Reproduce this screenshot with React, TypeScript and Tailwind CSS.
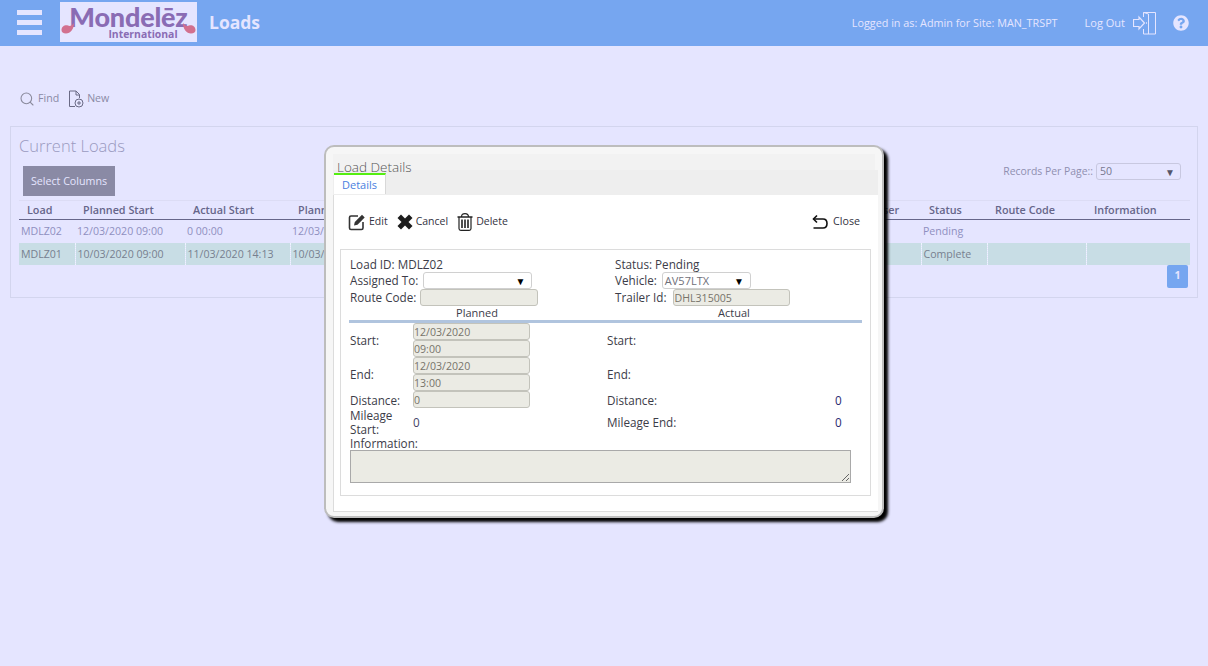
import React from "react";
import { Search } from "lucide-react";
import { FaQuestionCircle } from "react-icons/fa";

const font = "font-['Open_Sans','Noto_Sans',sans-serif]";

const cols = [
  { h: "Load", w: 56, a: "MDLZ02", b: "MDLZ01" },
  { h: "Planned Start", w: 110, a: "12/03/2020 09:00", b: "10/03/2020 09:00" },
  { h: "Actual Start", w: 105, a: "0 00:00", b: "11/03/2020 14:13" },
  { h: "Planned End", w: 110, a: "12/03/2020 13:00", b: "10/03/2020 13:00" },
  { h: "Actual End", w: 110, a: "", b: "" },
  { h: "Distance", w: 120, a: "0", b: "0" },
  { h: "Vehicle", w: 120, a: "AV57LTX", b: "AV57LTX" },
  { h: "Trailer", w: 117, a: "DHL315005", b: "" },
  { h: "User", w: 54, a: "", b: "" },
  { h: "Status", w: 66, a: "Pending", b: "Complete" },
  { h: "Route Code", w: 99, a: "", b: "" },
  { h: "Information", w: 104, a: "", b: "" },
];

function Disabled({ value, className = "" }: { value?: string; className?: string }) {
  return (
    <div className={`h-[17px] bg-[#ebebe4] border border-[#c3c3bb] rounded-[3px] text-[10.6px] leading-[16px] text-[#77736a] ${className}`}>
      {value}
    </div>
  );
}

function Select({ value, className }: { value?: string; className: string }) {
  return (
    <div className={`h-[17px] bg-white border border-[#d0d0d0] rounded-[3px] flex items-center justify-between pl-[2px] pr-[6px] text-[11px] text-[#6f6f78] ${className}`}>
      <span>{value}</span>
      <span className="text-[10px] text-black leading-none">▼</span>
    </div>
  );
}

function Logo() {
  return (
    <div className="relative w-[137px] h-[40px] bg-[#e5e5ff] flex flex-col items-center">
      <svg className="absolute left-[1px] top-[20px]" width="135" height="12" viewBox="0 0 135 12">
        <path d="M0.5 8C0.5 3.5 5 2.5 7 3.5C9 4.5 11 3.5 13 1C13 7 9.5 11.5 5 11.5C2 11.5 0.5 10 0.5 8Z" fill="#d2708f" />
        <path d="M134.5 8C134.5 3.5 130 2.5 128 3.5C126 4.5 124 3.5 122 1C122 7 125.5 11.5 130 11.5C133 11.5 134.5 10 134.5 8Z" fill="#d2708f" />
      </svg>
      <span className="font-['Lato',sans-serif] font-black text-[#8a6cb4] text-[27px] leading-[22px] tracking-[-0.2px] mt-[4px] whitespace-nowrap">Mondelēz</span>
      <span className="font-['Open_Sans',sans-serif] font-bold text-[#8a6cb4] text-[10.4px] leading-[10px] mt-[1px] ml-[29px] whitespace-nowrap">International</span>
    </div>
  );
}

export default function App() {
  return (
    <div className={`relative min-h-[666px] bg-[#e5e5ff] text-[10.6px] overflow-hidden ${font}`}>
      {/* Header */}
      <header className="h-[46px] bg-[#76a6f0] flex items-start">
        <div className="w-[25px] ml-[17px] mt-[10px] flex flex-col gap-[5px]">
          <div className="h-[5px] bg-[#e5e5ff]" />
          <div className="h-[5px] bg-[#e5e5ff]" />
          <div className="h-[5px] bg-[#e5e5ff]" />
        </div>
        <div className="ml-[18px] mt-[2px]"><Logo /></div>
        <h1 className="ml-[12px] mt-[10px] text-[17.5px] leading-[24px] font-bold text-[#e5e5ff]">Loads</h1>
        <div className="ml-auto flex items-center h-[46px] text-[#e5e5ff]">
          <span className="text-[10.8px]">Logged in as: Admin for Site: MAN_TRSPT</span>
          <span className="ml-[27px] text-[11px]">Log Out</span>
          <svg className="ml-[8px]" width="24" height="24" viewBox="0 0 24 24" fill="none" stroke="#e5e5ff" strokeWidth="1">
            <path d="M10.5 6V1.5H22.5V23H10.5V18" />
            <path d="M10.5 1.5L15.5 3V23" />
            <path d="M0.5 8.5H6V6L11.5 12L6 18V15.5H0.5Z" strokeWidth="1.2" />
            <path d="M13 12H14" strokeWidth="1.5" />
          </svg>
          <FaQuestionCircle className="ml-[16px] mr-[19px] text-[#e5e5ff]" size={16} />
        </div>
      </header>

      {/* Toolbar */}
      <div className="flex items-center mt-[44px] ml-[19px] h-[18px] text-[#8a8aa5]">
        <Search size={16} strokeWidth={1.6} className="text-[#8a8a9c]" />
        <span className="ml-[3px]">Find</span>
        <svg className="ml-[9px]" width="16" height="18" viewBox="0 0 16 18" fill="none" stroke="#6a6a85" strokeWidth="1">
          <path d="M7 16.5H1.5V1H8L11.5 4.5V8" />
          <path d="M8 1V5H11.5" />
          <circle cx="11" cy="13" r="4" fill="#e5e5ff" />
          <path d="M11 11V15M9 13H13" />
        </svg>
        <span className="ml-[3px]">New</span>
      </div>

      {/* Current Loads panel */}
      <section className="mt-[18px] mx-[10px] h-[172px] border border-[#d3d5ee] pl-[8px] pr-[7px]">
        <div className="h-[39px] pt-[6px] text-[16.5px] leading-[26px] text-[#9a9ac0] font-light">Current Loads</div>
        <div className="flex items-start h-[34px]">
          <button className="ml-[4px] w-[92px] h-[30px] bg-[#8a8aa5] text-[#e5e5ff] text-[10.7px]">Select Columns</button>
          <div className="ml-auto mr-[9px] -mt-[3px] flex items-center text-[#8f8fb0]">
            <span className="text-[10.4px]">Records Per Page::</span>
            <div className="ml-[3px] w-[85px] h-[17px] border border-[#c8c8e0] rounded-[3px] flex items-center justify-between pl-[3px] pr-[5px] text-[#77778f]">
              <span>50</span>
              <span className="text-[10px] text-[#55556a] leading-none">▼</span>
            </div>
          </div>
        </div>
        <table className="table-fixed border-collapse w-[1171px]">
          <colgroup>
            {cols.map((c) => <col key={c.h} style={{ width: c.w }} />)}
          </colgroup>
          <thead>
            <tr className="h-[19px] border-t border-[#dcdcf5] border-b border-b-[#66668a]">
              {cols.map((c) => (
                <th key={c.h} className="text-left font-semibold text-[10.8px] text-[#66668a] pl-[8px] whitespace-nowrap overflow-hidden">{c.h}</th>
              ))}
            </tr>
          </thead>
          <tbody>
            <tr className="h-[23px]">
              {cols.map((c) => (
                <td key={c.h} className="pl-[2px] pt-[2px] text-[#8f8fc0] whitespace-nowrap overflow-hidden">{c.a}</td>
              ))}
            </tr>
            <tr className="h-[22px] bg-[#c8dde5]">
              {cols.map((c, i) => (
                <td key={c.h} className={`pl-[2px] pt-[2px] text-[#77808f] whitespace-nowrap overflow-hidden ${i > 0 ? "border-l border-dotted border-[#eef4ff]" : ""}`}>{c.b}</td>
              ))}
            </tr>
          </tbody>
        </table>
        <div className="flex justify-end pr-[2px]">
          <div className="w-[21px] h-[23px] rounded-[2px] bg-[#76a6f0] text-[#e5e5ff] font-bold flex items-center justify-center">1</div>
        </div>
      </section>

      {/* Modal */}
      <div className="absolute left-[324px] top-[145px] w-[560px] h-[373px] bg-[#f6f6f6] border-2 border-[#bdbdbd] rounded-[10px] shadow-[4px_4px_3px_#000] pl-[7px] pr-[4px] pt-[7px] text-[#3c3c48]">
        <div className="h-[16px] mr-[3px] bg-[#f2f2f2] text-[13.5px] font-light leading-[26px] text-[#555] pl-[4px] whitespace-nowrap">Load Details</div>
        <div className="h-[25px] bg-[#eeeeee] pt-[4px]">
          <div className="w-[52px] h-[21px] ml-[1px] -mt-[1px] bg-white border-t-2 border-t-[#55ee11] border-r border-r-[#d8d8d8] text-[#4a80e0] text-[11px] leading-[19px] pl-[8px]">Details</div>
        </div>
        <div className="h-[317px] bg-white border-b border-l border-[#dcdcdc] px-[6px]">
          <div className="h-[54px] pb-[1px] flex items-center pl-[8px] text-[10.5px] text-[#33333f]">
            <svg width="18" height="18" viewBox="0 0 18 18" fill="none">
              <path d="M10 3H3Q1.5 3 1.5 4.5V15Q1.5 16.5 3 16.5H13.5Q15 16.5 15 15V9" stroke="#333" strokeWidth="1.6" />
              <path d="M6 12.5L6.8 9L14 1.8L16.7 4.5L9.5 11.7Z" fill="#333" />
            </svg>
            <span className="ml-[3px]">Edit</span>
            <svg className="ml-[9px]" width="16" height="16" viewBox="0 0 16 16">
              <path d="M0.5 4L4 0.5L8 4.5L12 0.5L15.5 4L11.5 8L15.5 12L12 15.5L8 11.5L4 15.5L0.5 12L4.5 8Z" fill="#1c1c1c" />
            </svg>
            <span className="ml-[3px]">Cancel</span>
            <svg className="ml-[9px]" width="16" height="18" viewBox="0 0 16 18" fill="none" stroke="#222" strokeWidth="1.2">
              <path d="M0.5 4H15.5" strokeWidth="1.5" />
              <path d="M4.5 4C4.5 1 6 0.7 8 0.7C10 0.7 11.5 1 11.5 4" />
              <path d="M2 4V15.5Q2 17.3 3.8 17.3H12.2Q14 17.3 14 15.5V4" />
              <path d="M5 6.5V15M8 6.5V15M11 6.5V15" strokeWidth="1.6" />
            </svg>
            <span className="ml-[3px]">Delete</span>
            <svg className="ml-auto" width="16" height="16" viewBox="0 0 16 16" fill="none" stroke="#111" strokeWidth="1.6">
              <path d="M5 1.5L1.5 5L5 8.5" />
              <path d="M1.5 5H11Q15 5 15 9.5Q15 14 11 14H1.5" />
            </svg>
            <span className="ml-[5px] mr-[12px] text-[10.7px]">Close</span>
          </div>
          <div className="w-[531px] h-[247px] border border-[#dcdcdc] pt-[7px] text-[11.7px] leading-[16px]">
            <div className="pl-[9px] pr-[8px]">
              <div className="grid grid-cols-[265px_1fr] grid-rows-[15px_17px_17px] items-center leading-[15px]">
                <div>Load ID: MDLZ02</div>
                <div>Status: Pending</div>
                <div className="flex items-center">Assigned To:<Select className="ml-[5px] w-[109px]" /></div>
                <div className="flex items-center">Vehicle:<Select value="AV57LTX" className="ml-[5px] w-[89px]" /></div>
                <div className="flex items-center">Route Code:<Disabled className="ml-[4px] w-[118px]" /></div>
                <div className="flex items-center">Trailer Id:<Disabled value="DHL315005" className="ml-[7px] w-[117px]" /></div>
              </div>
              <div className="grid grid-cols-[256px_1fr] h-[14px] leading-[14px] text-[11px] text-center w-[514px] -ml-[1px]">
                <div>Planned</div>
                <div>Actual</div>
              </div>
              <div className="h-[3px] w-[513px] -ml-[1px] bg-[#b0c4de]" />
              <div className="grid grid-cols-[63px_194px_228px_1fr] items-center">
                <div className="row-span-2">Start:</div>
                <div className="row-span-2 w-[117px]"><Disabled value="12/03/2020" /><Disabled value="09:00" /></div>
                <div className="row-span-2">Start:</div>
                <div className="row-span-2" />
                <div className="row-span-2">End:</div>
                <div className="row-span-2 w-[117px]"><Disabled value="12/03/2020" /><Disabled value="13:00" /></div>
                <div className="row-span-2">End:</div>
                <div className="row-span-2" />
                <div>Distance:</div>
                <div className="w-[117px]"><Disabled value="0" /></div>
                <div>Distance:</div>
                <div className="text-[#2a2a70]">0</div>
                <div className="leading-[14px] h-[28px]">Mileage Start:</div>
                <div className="text-[#444466]">0</div>
                <div>Mileage End:</div>
                <div className="text-[#2a2a70]">0</div>
              </div>
              <div className="leading-[14px]">Information:</div>
              <div className="relative w-[501px] h-[33px] bg-[#ebebe4] border border-[#a9a9a9]">
                <svg className="absolute right-0 bottom-0" width="9" height="9" viewBox="0 0 9 9" stroke="#666" strokeWidth="1">
                  <path d="M1 8L8 1M5 8L8 5" />
                </svg>
              </div>
            </div>
          </div>
        </div>
      </div>
    </div>
  );
}
